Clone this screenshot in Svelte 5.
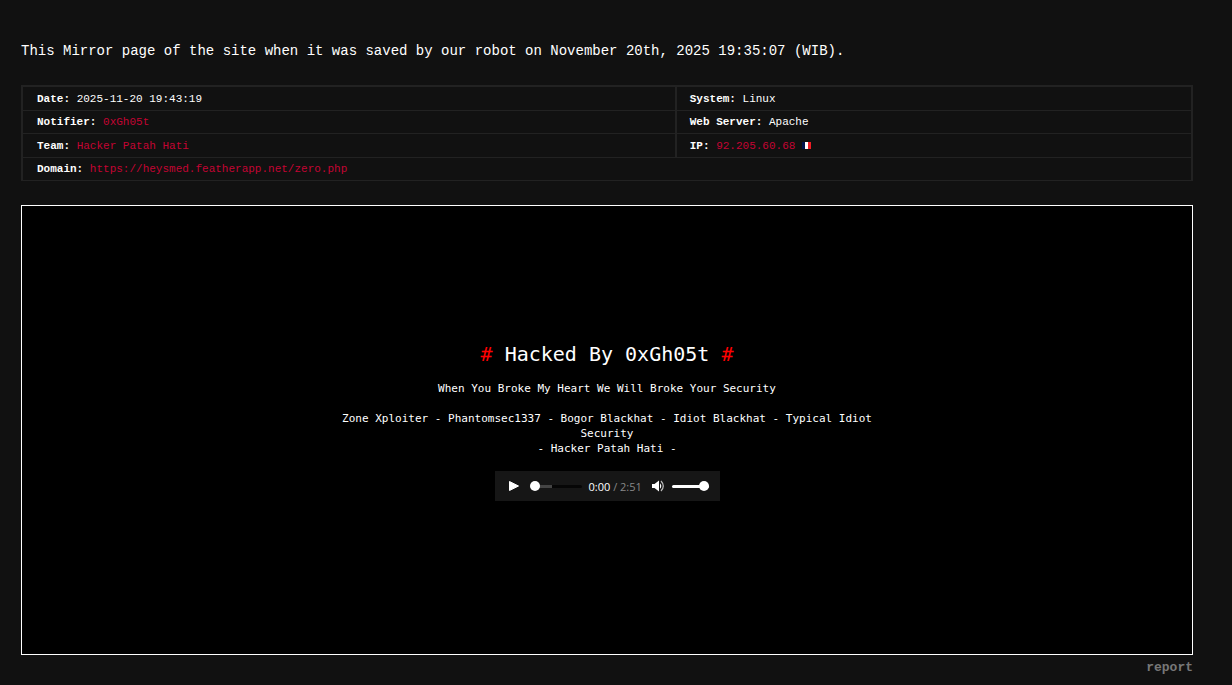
<script>
  const details = [
    [
      { label: 'Date', value: '2025-11-20 19:43:19' },
      { label: 'System', value: 'Linux' }
    ],
    [
      { label: 'Notifier', value: '0xGh05t', link: true },
      { label: 'Web Server', value: 'Apache' }
    ],
    [
      { label: 'Team', value: 'Hacker Patah Hati', link: true },
      { label: 'IP', value: '92.205.60.68', link: true, flag: true }
    ],
    [{ label: 'Domain', value: 'https://heysmed.featherapp.net/zero.php', link: true, wide: true }]
  ];

  let position = $state(0);
  let volume = $state(100);
</script>

<main>
  <p class="intro">
    This Mirror page of the site when it was saved by our robot on November 20th, 2025 19:35:07 (WIB).
  </p>

  <table>
    <colgroup>
      <col class="first" />
      <col />
    </colgroup>
    <tbody>
      {#each details as row}
        <tr>
          {#each row as cell}
            <td colspan={cell.wide ? 2 : 1}>
              <strong>{cell.label}:</strong>
              {#if cell.link}<a href="#top">{cell.value}</a>{:else}{cell.value}{/if}
              {#if cell.flag}
                <svg class="flag" viewBox="0 0 9 7" role="img" aria-label="France">
                  <path fill="#00144c" d="M0 0h3v7H0z" />
                  <path fill="#fff" d="M3 0h3v7H3z" />
                  <path fill="#f01c24" d="M6 0h3v7H6z" />
                </svg>
              {/if}
            </td>
          {/each}
        </tr>
      {/each}
    </tbody>
  </table>

  <section class="mirror">
    <h1><span>#</span> Hacked By 0xGh05t <span>#</span></h1>
    <p>When You Broke My Heart We Will Broke Your Security</p>
    <p>
      Zone Xploiter - Phantomsec1337 - Bogor Blackhat - Idiot Blackhat - Typical Idiot Security<br />
      - Hacker Patah Hati -
    </p>

    <div class="player">
      <button aria-label="Play">
        <svg width="12" height="12" viewBox="0 0 12 12">
          <path fill="#fff" stroke="#fff" stroke-linejoin="round" d="M1.5 1.5v9L10.5 6z" />
        </svg>
      </button>
      <input class="seek" type="range" min="0" max="171" aria-label="Position" bind:value={position} />
      <span class="time">0:00 <span>/ 2:51</span></span>
      <button aria-label="Mute">
        <svg width="14" height="12" viewBox="0 0 14 12">
          <path fill="#fff" d="M1 4h2.5L8 0.5v11L3.5 8H1z" />
          <path fill="#fff" d="M9 3.2q2.6 2.8 0 5.6z" />
          <path fill="none" stroke="#bbb" stroke-width="1.2" d="M10 1q4.6 5 0 10" />
        </svg>
      </button>
      <input class="volume" type="range" min="0" max="100" aria-label="Volume" bind:value={volume} />
    </div>
  </section>

  <a class="report" href="#report">report</a>
</main>

<style>
  :global(body) {
    background: #111;
    color: #fff;
  }

  main {
    display: flex;
    flex-direction: column;
    padding: 41px 39px 8px 21px;
    font-family: 'Liberation Mono', monospace;
  }

  .intro {
    margin: 0 0 24px;
    font-size: 14px;
    line-height: 20px;
  }

  table {
    width: 100%;
    table-layout: fixed;
    border: 2px solid #222;
    border-bottom: 0;
    border-spacing: 0;
    font-size: 11px;
    line-height: 16px;
  }

  .first {
    width: 55.8%;
  }

  td {
    box-sizing: border-box;
    height: 23px;
    padding: 0 14px;
    border-bottom: 1px solid #222;
    white-space: nowrap;
  }

  tr:nth-child(odd) td {
    height: 24px;
  }

  td + td {
    border-left: 2px solid #222;
    padding-left: 13px;
  }

  a {
    color: #c40433;
    text-decoration: none;
  }

  .flag {
    width: 9px;
    height: 7px;
  }

  .mirror {
    display: flex;
    flex-direction: column;
    align-items: center;
    box-sizing: border-box;
    min-height: 450px;
    margin-top: 24px;
    padding: 135px 16px 16px;
    border: 1px solid #fff;
    background: #000;
    font-family: 'DejaVu Sans Mono', monospace;
    font-size: 11px;
    line-height: 15px;
    text-align: center;
  }

  h1 {
    margin: 0 0 14px;
    font-size: 20px;
    font-weight: 400;
    line-height: 26px;
  }

  h1 span {
    color: #f00;
  }

  .mirror p {
    width: 48%;
    margin: 0 0 15px;
  }

  .player {
    display: flex;
    align-items: center;
    box-sizing: border-box;
    width: 225px;
    height: 30px;
    padding: 0 11px 0 13px;
    background: #161616;
  }

  button {
    display: flex;
    padding: 0;
    border: 0;
    background: none;
  }

  input {
    appearance: none;
    height: 10px;
    margin: 0;
    background: none;
  }

  input::-webkit-slider-runnable-track {
    height: 3px;
    border-radius: 2px;
  }

  input::-webkit-slider-thumb {
    appearance: none;
    width: 10px;
    height: 10px;
    margin-top: -4px;
    border-radius: 50%;
    background: #fff;
  }

  .seek {
    width: 52px;
    margin: 0 7px 0 10px;
  }

  .seek::-webkit-slider-runnable-track {
    background: linear-gradient(to right, #444 22px, #060606 22px);
  }

  .volume {
    width: 37px;
    margin-left: 7px;
  }

  .volume::-webkit-slider-runnable-track {
    background: #fff;
  }

  .time {
    flex: 1;
    font-family: 'Open Sans', sans-serif;
    font-size: 11px;
    text-align: left;
    white-space: nowrap;
  }

  .time span {
    color: #888;
  }

  .report {
    align-self: flex-end;
    margin-top: 3px;
    color: #777;
    font-size: 13px;
    font-weight: 700;
    line-height: 20px;
  }
</style>
